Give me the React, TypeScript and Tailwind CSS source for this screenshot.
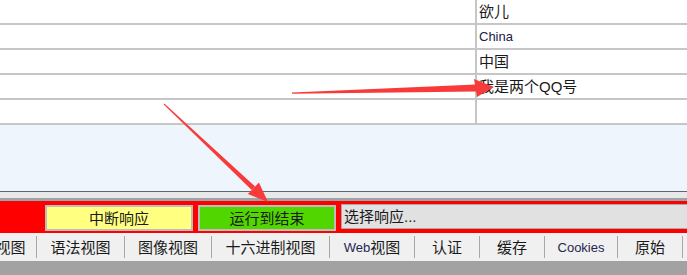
import React from "react";

const rows = [
  { text: "欲儿", latin: false },
  { text: "China", latin: true },
  { text: "中国", latin: false },
  { text: "我是两个QQ号", latin: false },
  { text: "", latin: false },
];

const tabs = [
  { label: "文本视图", w: 82 },
  { label: "语法视图", w: 88 },
  { label: "图像视图", w: 87 },
  { label: "十六进制视图", w: 118 },
  { label: "Web视图", w: 85 },
  { label: "认证", w: 65 },
  { label: "缓存", w: 65 },
  { label: "Cookies", w: 73 },
  { label: "原始", w: 65 },
  { label: "", w: 70 },
];

function Arrows() {
  // red annotation arrows drawn over the screenshot
  return (
    <svg className="pointer-events-none absolute inset-0" width="687" height="275" viewBox="0 0 687 275">
      <polygon points="292,92.5 476,84.5 476,91.5 292,93.8" fill="#f83a3a" />
      <polygon points="474,79 494,87 477,97" fill="#f83a3a" />
      <polygon points="164.3,103.6 255.1,186.5 251.7,190.1 163.7,104.4" fill="#f83a3a" />
      <polygon points="258.9,182.5 268,202 247.9,194.1" fill="#f83a3a" />
    </svg>
  );
}

function TabLabel({ label }: { label: string }) {
  if (label === "Cookies") return <span className="text-[13px] text-[#262650]">Cookies</span>;
  if (label === "Web视图")
    return (
      <>
        <span className="text-[13px] text-[#262650]">Web</span>视图
      </>
    );
  return <>{label}</>;
}

export default function App() {
  return (
    <div
      className="relative h-[275px] w-[687px] overflow-hidden bg-white text-[#1a1a1a]"
      style={{ fontFamily: '"Liberation Sans", "Noto Sans CJK SC", sans-serif' }}
    >
      {/* grid rows */}
      <div className="flex flex-col">
        {rows.map((r, i) => (
          <div key={i} className="flex h-[25px] border-b-2 border-[#c6c6c6]">
            <div className="w-[475px] shrink-0" />
            <div className="flex flex-1 items-center border-l-2 border-[#c6c6c6] pl-[2px]">
              {r.latin ? (
                <span className="text-[13px] text-[#202048]">{r.text}</span>
              ) : (
                <span className="text-[15px] leading-none">{r.text}</span>
              )}
            </div>
          </div>
        ))}
      </div>

      <div className="h-[66px] bg-[#eef5fc]" />
      <div className="h-px bg-[#5f6870]" />
      <div className="h-[6px] bg-[#e8e8e8]" />
      <div className="h-[3px] bg-[#9ba2a8]" />

      {/* action bar */}
      <div className="flex h-[32px] items-start bg-[#ff0000]">
        <div className="w-[45px] shrink-0" />
        <button className="mt-[4px] flex h-[26px] w-[148px] shrink-0 items-center justify-center border-2 border-[#bdbdbd] bg-[#ffff80] text-[15px] leading-none">
          中断响应
        </button>
        <button className="ml-[5px] mt-[4px] flex h-[26px] w-[138px] shrink-0 items-center justify-center border-2 border-[#bdbdbd] bg-[#52d600] text-[15px] leading-none">
          运行到结束
        </button>
        <div className="-mr-[6px] ml-[5px] mt-[3px] flex h-[25px] flex-1 items-center border border-[#a8a8a8] bg-[#e1e1e1] pl-[2px] text-[15px] leading-none">
          选择响应...
        </div>
      </div>

      {/* inspector tabs */}
      <div className="flex h-[28px] items-center bg-[#f0f0f0]">
        <div className="-ml-[45px] flex">
          {tabs.map((t, i) => (
            <div
              key={i}
              className="flex h-[22px] shrink-0 items-center justify-center border-r border-[#a8a8a8] text-[15px] leading-none"
              style={{ width: t.w }}
            >
              <TabLabel label={t.label} />
            </div>
          ))}
        </div>
      </div>
      <div className="h-[14px] bg-[#a2a2a2]" />

      <Arrows />
    </div>
  );
}
